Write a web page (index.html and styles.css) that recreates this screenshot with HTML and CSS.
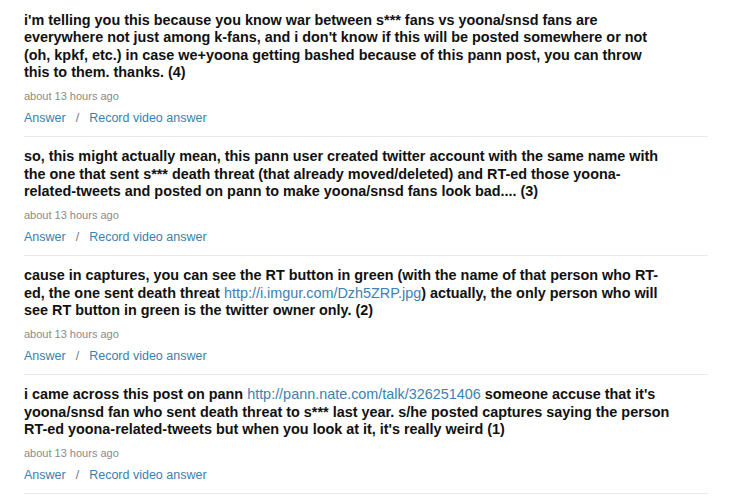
FILE: index.html
```html
<!DOCTYPE html>
<html lang="en">
<head>
<meta charset="utf-8">
<title>Questions</title>
<link rel="stylesheet" href="styles.css">
</head>
<body>
<div class="list">
  <div class="item first">
    <p class="question">i'm telling you this because you know war between s*** fans vs yoona/snsd fans are<br>everywhere not just among k-fans, and i don't know if this will be posted somewhere or not<br>(oh, kpkf, etc.) in case we+yoona getting bashed because of this pann post, you can throw<br>this to them. thanks. (4)</p>
    <div class="time">about 13 hours ago</div>
    <div class="actions"><a href="#">Answer</a><span class="sep">/</span><a href="#">Record video answer</a></div>
  </div>
  <div class="item">
    <p class="question">so, this might actually mean, this pann user created twitter account with the same name with<br>the one that sent s*** death threat (that already moved/deleted) and RT-ed those yoona-<br>related-tweets and posted on pann to make yoona/snsd fans look bad.... (3)</p>
    <div class="time">about 13 hours ago</div>
    <div class="actions"><a href="#">Answer</a><span class="sep">/</span><a href="#">Record video answer</a></div>
  </div>
  <div class="item">
    <p class="question">cause in captures, you can see the RT button in green (with the name of that person who RT-<br>ed, the one sent death threat <a class="inline" href="#">http://i.imgur.com/Dzh5ZRP.jpg</a>) actually, the only person who will<br>see RT button in green is the twitter owner only. (2)</p>
    <div class="time">about 13 hours ago</div>
    <div class="actions"><a href="#">Answer</a><span class="sep">/</span><a href="#">Record video answer</a></div>
  </div>
  <div class="item">
    <p class="question">i came across this post on pann <a class="inline" href="#">http://pann.nate.com/talk/326251406</a> someone accuse that it's<br>yoona/snsd fan who sent death threat to s*** last year. s/he posted captures saying the person<br>RT-ed yoona-related-tweets but when you look at it, it's really weird (1)</p>
    <div class="time">about 13 hours ago</div>
    <div class="actions"><a href="#">Answer</a><span class="sep">/</span><a href="#">Record video answer</a></div>
  </div>
</div>
</body>
</html>
```

FILE: styles.css
```css
html, body {
  margin: 0;
  padding: 0;
  background: #ffffff;
}

body {
  font-family: "Liberation Sans", Arial, Helvetica, sans-serif;
  color: #111111;
}

.list {
  width: 684px;
  margin: 0 0 0 24px;
}

.item {
  padding: 11.5px 0 10px;
  border-bottom: 1px solid #e9e9e9;
}

.question {
  margin: 0 0 7px;
  font-size: 14.4px;
  line-height: 17.5px;
  font-weight: bold;
  white-space: nowrap;
}

.question .inline {
  font-weight: normal;
  color: #3a82b2;
  text-decoration: none;
}

.time {
  font-size: 11px;
  line-height: 14px;
  color: #8a8a8a;
  margin-bottom: 7px;
}

.actions {
  font-size: 12.5px;
  line-height: 16px;
  display: flex;
  align-items: baseline;
}

.actions a {
  color: #3a7fae;
  text-decoration: none;
}

.sep {
  color: #777777;
  padding: 0 10px 0 10px;
}
```
